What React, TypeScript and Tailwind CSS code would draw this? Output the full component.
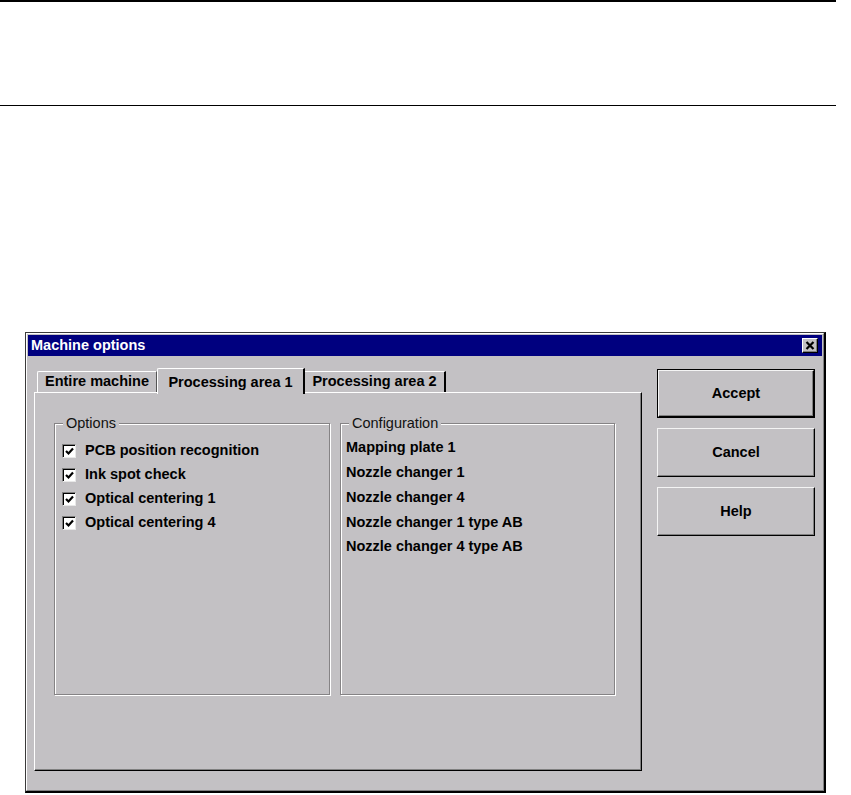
import React from "react";

const face = "bg-[#c3c1c4]";

function CheckRow({ label }: { label: string }) {
  return (
    <div className="flex items-center h-[24px]">
      <div className="w-[14px] h-[14px] bg-white border-t border-l border-[#808080] border-r border-r-[#e8e8e8] border-b border-b-[#e8e8e8] shadow-[inset_1px_1px_0_#000] flex items-center justify-center">
        <svg width="9" height="9" viewBox="0 0 9 9">
          <path d="M1 4 L3.5 6.5 L8 1.5" stroke="#000" strokeWidth="2.2" fill="none" />
        </svg>
      </div>
      <span className="ml-[9px] font-bold text-[14.5px] text-black">{label}</span>
    </div>
  );
}

function Group({ title, children, w }: { title: string; children: React.ReactNode; w: string }) {
  return (
    <div className={`relative ${w} h-[272px] border border-[#858385] shadow-[inset_1px_1px_0_#fff,1px_1px_0_#fff]`}>
      <span className={`absolute -top-[10px] left-[8px] px-[3px] ${face} text-[14.5px] leading-[18px] text-[#111]`}>
        {title}
      </span>
      {children}
    </div>
  );
}

function Btn({ label, def }: { label: string; def?: boolean }) {
  return (
    <div
      className={`w-[158px] h-[49px] ${face} flex items-center justify-center ${
        def ? "border border-black" : ""
      }`}
    >
      <div className="w-full h-full border-t border-l border-[#f4f4f4] border-r border-b border-r-black border-b-black shadow-[inset_-1px_-1px_0_#808080] flex items-center justify-center">
        <span className="font-bold text-[14.5px] text-black">{label}</span>
      </div>
    </div>
  );
}

export default function App() {
  return (
    <div className="w-[851px] h-[795px] bg-white relative overflow-hidden" style={{ fontFamily: '"Liberation Sans", Arial, sans-serif' }}>
      <div className="w-[836px] h-[2px] bg-black" />
      <div className="w-[836px] h-[1px] bg-black mt-[103px]" />

      <div className={`ml-[25px] mt-[226px] w-[801px] h-[461px] ${face} border border-[#3a3a3a] border-r-2 border-b-2 border-r-black border-b-black`}>
        <div className="w-full h-full border-t border-l border-white border-r border-b border-r-[#808080] border-b-[#808080] p-[1px] flex flex-col">
          {/* title bar */}
          <div className="h-[21px] bg-[#00007f] flex items-center justify-between pl-[3px] pr-[4px]">
            <span className="text-white font-bold text-[14.5px] leading-none">Machine options</span>
            <div className={`w-[16px] h-[15px] ${face} border-t border-l border-white border-r border-b border-r-black border-b-black shadow-[inset_-1px_-1px_0_#808080] flex items-center justify-center`}>
              <svg width="10" height="9" viewBox="0 0 10 9">
                <path d="M1.5 1 L8.5 8 M8.5 1 L1.5 8" stroke="#000" strokeWidth="2.2" />
              </svg>
            </div>
          </div>

          {/* body */}
          <div className="flex pl-[6px] pt-[12px]">
            {/* tabs + panel */}
            <div className="w-[608px] flex flex-col">
              <div className="h-[24px] flex items-end pl-[3px] relative z-10">
                <div className={`w-[120px] h-[21px] ${face} border-t border-l border-white border-r border-r-[#555] rounded-tl-[2px] flex items-center justify-center`}>
                  <span className="font-bold text-[14.5px] text-black">Entire machine</span>
                </div>
                <div className={`w-[148px] h-[26px] -mb-[2px] ${face} border-t border-l border-white border-r-2 border-r-black rounded-tl-[2px] flex items-start justify-center pt-[3px]`}>
                  <span className="font-bold text-[14.5px] text-black">Processing area 1</span>
                </div>
                <div className={`w-[141px] h-[21px] ${face} border-t border-white border-r-2 border-r-black flex items-center justify-center`}>
                  <span className="font-bold text-[14.5px] text-black">Processing area 2</span>
                </div>
              </div>
              <div className={`h-[379px] ${face} border-t border-l border-white border-r border-b border-r-black border-b-black shadow-[inset_-1px_-1px_0_#808080] pl-[19px] pt-[30px] flex gap-[10px]`}>
                <Group title="Options" w="w-[276px]">
                  <div className="pl-[7px] pt-[15px]">
                    <CheckRow label="PCB position recognition" />
                    <CheckRow label="Ink spot check" />
                    <CheckRow label="Optical centering 1" />
                    <CheckRow label="Optical centering 4" />
                  </div>
                </Group>
                <Group title="Configuration" w="w-[275px]">
                  <div className="pl-[5px] pt-[12px] flex flex-col">
                    {["Mapping plate 1", "Nozzle changer 1", "Nozzle changer 4", "Nozzle changer 1 type AB", "Nozzle changer 4 type AB"].map((t) => (
                      <div key={t} className="h-[24.7px] flex items-center font-bold text-[14.5px] text-black">
                        {t}
                      </div>
                    ))}
                  </div>
                </Group>
              </div>
            </div>

            {/* buttons */}
            <div className="ml-[15px] pt-[1px] flex flex-col gap-[10px]">
              <Btn label="Accept" def />
              <Btn label="Cancel" />
              <Btn label="Help" />
            </div>
          </div>
        </div>
      </div>
    </div>
  );
}
